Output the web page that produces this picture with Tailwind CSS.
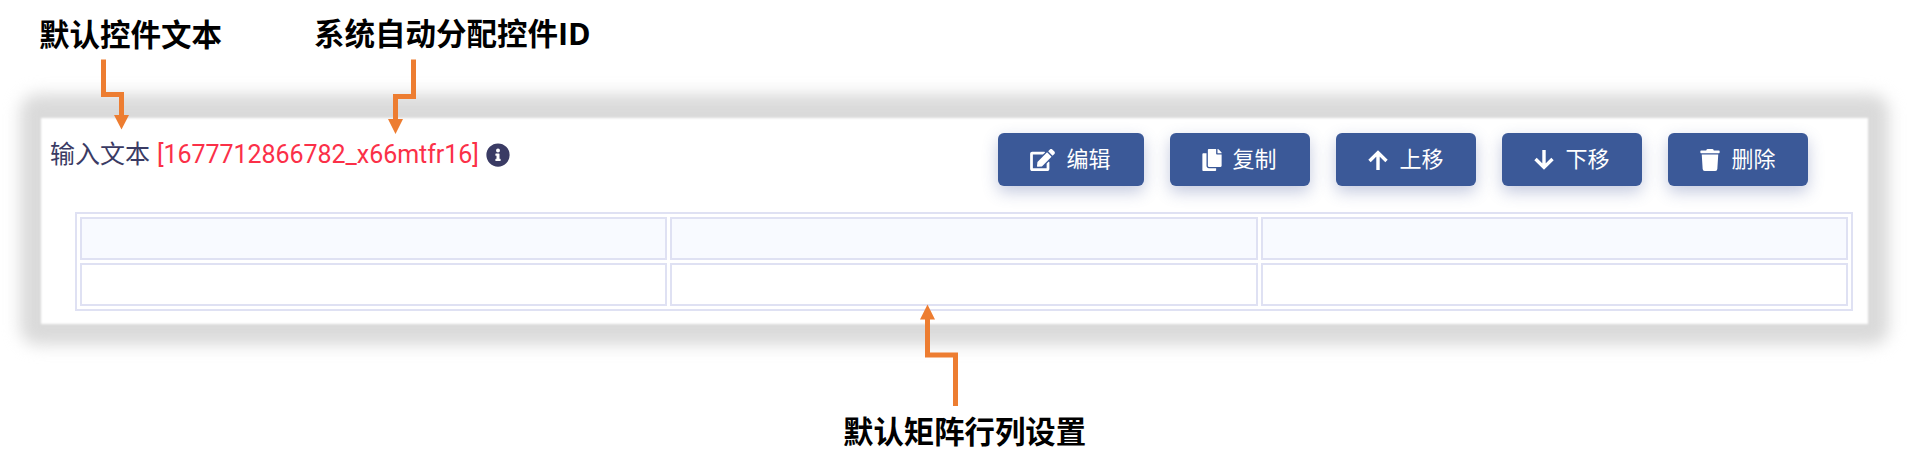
<!DOCTYPE html>
<html lang="zh-CN">
<head>
<meta charset="utf-8">
<title>默认控件</title>
<script src="https://cdn.jsdelivr.net/npm/@tailwindcss/browser@4"></script>
</head>
<body class="relative isolate h-[469px] w-[1907px] overflow-hidden bg-white font-['Roboto','Noto_Sans_CJK_SC',sans-serif]">
  <header class="flex h-[117px] gap-[93px] pt-[11px] pl-[39px] font-['Open_Sans','Noto_Sans_CJK_SC',sans-serif] text-[30.5px] leading-[44px] font-bold whitespace-nowrap text-black">
    <h2 class="w-[182px] pt-px">默认控件文本</h2>
    <h2>系统自动分配控件ID</h2>
  </header>

  <main class="relative ml-[41px] h-[207px] w-[1827px]">
    <div class="absolute -inset-x-[21px] -top-[23px] -bottom-[21px] rounded-[18px] bg-[#dadada] blur-[8px]"></div>
    <div class="absolute inset-x-0 top-px bottom-0 bg-white blur-[1px]"></div>
    <section class="relative pt-4">
      <div class="flex h-[53px] pr-[60.5px]">
        <div class="mr-auto flex h-[44px] items-center pl-[9px] text-[25px] whitespace-nowrap text-[#3a3b64]">
          <span class="w-[107px]">输入文本</span>
          <span class="w-[321px] tracking-[-0.05px] text-[#fb3048]">[1677712866782_x66mtfr16]</span>
          <svg class="ml-[8px] size-6" viewBox="0 0 512 512" fill="currentColor"><path d="M256 8a248 248 0 1 0 0 496 248 248 0 0 0 0-496zm0 110a42 42 0 1 1 0 84 42 42 0 0 1 0-84zm56 254a12 12 0 0 1-12 12h-88a12 12 0 0 1-12-12v-24a12 12 0 0 1 12-12h12v-64h-12a12 12 0 0 1-12-12v-24a12 12 0 0 1 12-12h64a12 12 0 0 1 12 12v100h12a12 12 0 0 1 12 12z"/></svg>
        </div>
        <div class="flex gap-[26px] text-[22px] text-white">
          <button class="flex w-[146px] items-center rounded-md bg-[#3b5998] pl-[32px] shadow-[0_6px_16px_rgba(70,90,155,0.32)]">
            <svg class="mr-[12px] h-[22px] w-[25px] shrink-0" viewBox="0 0 576 512" fill="currentColor"><path d="M402.600 83.200l90.200 90.200c3.800 3.800 3.800 10 0 13.800L274.400 405.600l-92.800 10.300c-12.400 1.400-22.900-9.100-21.500-21.500l10.300-92.800L388.800 83.200c3.800-3.800 10-3.800 13.800 0zm162-22.900l-48.800-48.800c-15.200-15.200-39.900-15.200-55.200 0l-35.400 35.400c-3.800 3.800-3.800 10 0 13.800l90.200 90.200c3.800 3.800 10 3.800 13.800 0l35.400-35.400c15.200-15.300 15.200-40 0-55.200zM384 346.200V448H64V128h229.800c3.200 0 6.200-1.300 8.500-3.500l40-40c7.600-7.600 2.200-20.500-8.500-20.500H48C21.500 64 0 85.500 0 112v352c0 26.500 21.500 48 48 48h352c26.500 0 48-21.500 48-48V306.200c0-10.700-12.900-16-20.500-8.500l-40 40c-2.200 2.300-3.500 5.300-3.500 8.500z"/></svg>
            <span>编辑</span>
          </button>
          <button class="flex w-[140px] items-center rounded-md bg-[#3b5998] pl-[32px] shadow-[0_6px_16px_rgba(70,90,155,0.32)]">
            <svg class="mr-[11px] h-[22px] w-[20px] shrink-0" viewBox="0 0 448 512" fill="currentColor"><path d="M320 448v40c0 13.300-10.700 24-24 24H24c-13.300 0-24-10.700-24-24V120c0-13.300 10.700-24 24-24h72v296c0 30.900 25.100 56 56 56h168zm0-344V0H152c-13.300 0-24 10.700-24 24v368c0 13.300 10.700 24 24 24h272c13.300 0 24-10.700 24-24V128H344c-13.200 0-24-10.800-24-24zm121-31L375 7A24 24 0 0 0 358.100 0H352v96h96v-6.100A24 24 0 0 0 441 73z"/></svg>
            <span>复制</span>
          </button>
          <button class="flex w-[140px] items-center rounded-md bg-[#3b5998] pl-[32px] shadow-[0_6px_16px_rgba(70,90,155,0.32)]">
            <svg class="mr-[12px] h-[20px] w-[20px] shrink-0" viewBox="0 0 20 20" fill="none" stroke="currentColor" stroke-width="3.4"><path d="M1.500 11 10 2.600 18.500 11M10 3v17"/></svg>
            <span>上移</span>
          </button>
          <button class="flex w-[140px] items-center rounded-md bg-[#3b5998] pl-[32px] shadow-[0_6px_16px_rgba(70,90,155,0.32)]">
            <svg class="mr-[12px] h-[20px] w-[20px] shrink-0" viewBox="0 0 20 20" fill="none" stroke="currentColor" stroke-width="3.4"><path d="M1.500 9 10 17.400 18.500 9M10 17V0"/></svg>
            <span>下移</span>
          </button>
          <button class="flex w-[140px] items-center rounded-md bg-[#3b5998] pl-[32px] shadow-[0_6px_16px_rgba(70,90,155,0.32)]">
            <svg class="mr-[12px] h-[22px] w-[20px] shrink-0" viewBox="0 0 448 512" fill="currentColor"><path d="M432 32H312l-9.400-18.700A24 24 0 0 0 281.100 0H166.800a23.700 23.700 0 0 0-21.400 13.300L136 32H16A16 16 0 0 0 0 48v32a16 16 0 0 0 16 16h416a16 16 0 0 0 16-16V48a16 16 0 0 0-16-16zM32 128l21.200 339a48 48 0 0 0 47.900 45h245.800a48 48 0 0 0 47.900-45L416 128z"/></svg>
            <span>删除</span>
          </button>
        </div>
      </div>
      <div class="mt-[26px] ml-[34px] grid h-[99px] w-[1778px] grid-cols-3 grid-rows-2 gap-[3px] border-2 border-[#dfe1f3] bg-white p-[3px]">
        <div class="border-2 border-[#dfe1f3] bg-[#f8faff]"></div>
        <div class="border-2 border-[#dfe1f3] bg-[#f8faff]"></div>
        <div class="border-2 border-[#dfe1f3] bg-[#f8faff]"></div>
        <div class="border-2 border-[#dfe1f3]"></div>
        <div class="border-2 border-[#dfe1f3]"></div>
        <div class="border-2 border-[#dfe1f3]"></div>
      </div>
    </section>
  </main>

  <footer class="pt-[84px] pl-[843px] font-['Noto_Sans_CJK_SC',sans-serif] text-[30.4px] leading-[44px] font-bold text-black">
    <h2>默认矩阵行列设置</h2>
  </footer>

  <svg class="absolute inset-0" width="1907" height="469" fill="none" stroke="#ed7d31" stroke-width="5">
    <path d="M103.500 59.500V94.500H121.500V117M413.500 59.500V96.500H395.500V121M955.500 406V355H927.500V318"/>
    <path fill="#ed7d31" stroke="none" d="M114 115h15l-7.500 14.500zM388 119h15l-7.500 15zM920 319.500h15l-7.500-15z"/>
  </svg>
</body>
</html>
